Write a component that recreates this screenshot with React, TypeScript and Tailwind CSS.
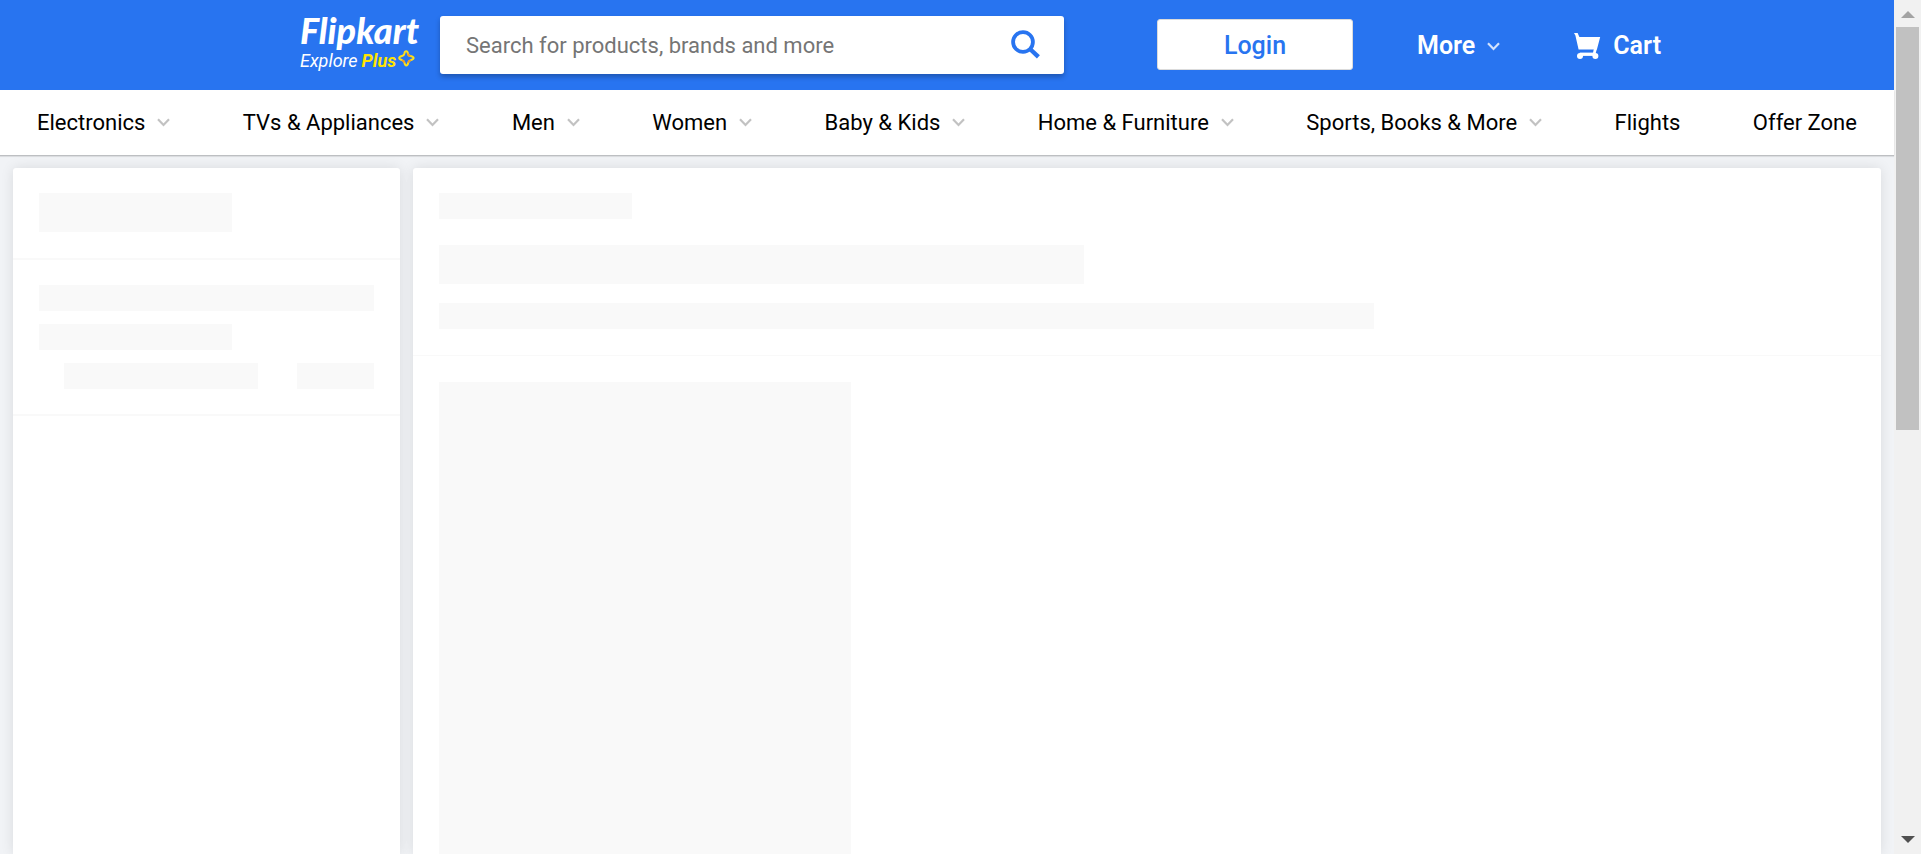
import React from "react";

const categories = [
  { label: "Electronics", menu: true },
  { label: "TVs & Appliances", menu: true },
  { label: "Men", menu: true },
  { label: "Women", menu: true },
  { label: "Baby & Kids", menu: true },
  { label: "Home & Furniture", menu: true },
  { label: "Sports, Books & More", menu: true },
  { label: "Flights", menu: false },
  { label: "Offer Zone", menu: false },
];

function Chevron({ className }: { className: string }) {
  return (
    <svg viewBox="0 0 13 9" className={"ml-3 h-[9px] w-[13px] shrink-0 " + className} fill="none" stroke="currentColor" strokeWidth="2.200" aria-hidden="true">
      <path d="M1 1.2 6.5 6.9 12 1.2" />
    </svg>
  );
}

function Logo() {
  return (
    <a href="#home" className="flex w-[140px] shrink-0 flex-col pb-2">
      <span className="font-['Lato'] text-[36px] leading-[40px] font-black text-white italic">Flipkart</span>
      <span className="flex items-start text-[18px] leading-[22px] text-white italic">
        <span>Explore</span>
        <span className="ml-1 font-bold text-[#ffe500]">Plus</span>
        <svg viewBox="0 0 17 17" className="ml-0.5 h-[17px] w-[17px]" fill="none" aria-hidden="true">
          <path d="M8.2 1.2c1 0 1.500.8 1.700 2.300.2 1.600.9 2.300 2.500 2.600 2 .4 3.200.9 3.200 2 0 1-.9 1.600-2.800 2-1.700.4-2.300 1.100-2.600 2.700-.3 1.700-.9 2.600-1.900 2.600s-1.500-.9-1.800-2.600c-.3-1.600-1-2.300-2.600-2.700C2 9.700 1.200 9.100 1.200 8.100c0-1 .9-1.600 2.700-2 1.500-.3 2.200-1 2.500-2.600.2-1.500.8-2.300 1.800-2.300Z" stroke="#ffe11b" strokeWidth="2" />
          <path d="M9.900 3.500c.2 1.600.9 2.300 2.500 2.600M12.800 10.100c-1.700.4-2.300 1.100-2.600 2.700M3.900 10.100c1.600.4 2.300 1.100 2.600 2.700" stroke="#f59b23" strokeWidth="2" />
        </svg>
      </span>
    </a>
  );
}

function Header() {
  return (
    <header className="flex h-[90px] items-center bg-[#2874f0] pl-[300px]">
      <Logo />
      <form className="flex h-[58px] max-w-[624px] flex-1 items-center rounded-[3px] bg-white shadow-[0_3px_5px_rgba(0,0,0,0.25)]">
        <input
          type="text"
          aria-label="Search for products, brands and more"
          placeholder="Search for products, brands and more"
          className="h-full min-w-0 flex-1 bg-transparent pl-[26px] text-[22px] text-black outline-none placeholder:text-[#757575]"
        />
        <button type="button" aria-label="Search" className="mr-[23px] flex h-[30px] w-[30px] items-center justify-center text-[#2874f0]">
          <svg viewBox="0 0 30 30" className="h-[30px] w-[30px]" fill="none" stroke="currentColor" aria-hidden="true">
            <circle cx="12" cy="12" r="9.900" strokeWidth="3.800" />
            <path d="M19 19 27.400 26.800" strokeWidth="4.400" />
          </svg>
        </button>
      </form>
      <div className="flex shrink-0 items-center text-[25px] text-white">
        <button type="button" className="mb-px ml-[93px] h-[51px] w-[196px] rounded-[3px] border border-[#dbdbdb] bg-white pt-0.5 font-medium text-[#2874f0]">
          Login
        </button>
        <button type="button" className="ml-16 flex items-center pt-0.5 font-semibold">
          More
          <Chevron className="text-[#d4e3fc]" />
        </button>
        <a href="#cart" className="ml-[74px] flex items-center pt-0.5 font-semibold">
          <svg viewBox="0 0 27 26" className="mr-3 h-[26px] w-[27px]" fill="currentColor" aria-hidden="true">
            <path d="M0 0H3.600L5.400 4H26.200L22.900 16.500H4.600L1.400 2.600Z" />
            <path d="M20 15.500H23L21.600 20.500H18.800Z" />
            <path d="M5.800 19.600H21.500V22.900H5.800Z" />
            <circle cx="6" cy="22.900" r="3" />
            <circle cx="21.400" cy="22.900" r="3" />
          </svg>
          Cart
        </a>
      </div>
    </header>
  );
}

function CategoryBar() {
  return (
    <nav className="relative z-10 flex h-[65px] items-center justify-between bg-white px-[37px] text-[22px] whitespace-nowrap text-black shadow-[0_1px_1px_rgba(0,0,0,0.16),0_2px_1px_rgba(0,0,0,0.06)]">
      {categories.map((c) => (
        <a key={c.label} href="#category" className="flex items-center">
          {c.label}
          {c.menu && <Chevron className="text-[#c2c2c2]" />}
        </a>
      ))}
    </nav>
  );
}

function Block({ className }: { className: string }) {
  return <div className={"bg-[#f9f9f9] " + className} />;
}

function FilterPanel() {
  return (
    <aside className="w-[387px] shrink-0 rounded-t-[3px] bg-white shadow-[0_0_13px_rgba(0,0,0,0.1)]">
      <div className="border-b-2 border-[#f9f9f9] px-[26px] pt-[25px] pb-[26px]">
        <Block className="h-[39px] w-[193px]" />
      </div>
      <div className="flex flex-col gap-[13px] border-b-2 border-[#f9f9f9] px-[26px] py-[25px]">
        <Block className="h-[26px] w-full" />
        <Block className="h-[26px] w-[193px]" />
        <div className="flex justify-between pl-[25px]">
          <Block className="h-[26px] w-[194px]" />
          <Block className="h-[26px] w-[77px]" />
        </div>
      </div>
    </aside>
  );
}

function ResultsPanel() {
  return (
    <main className="flex flex-1 flex-col rounded-t-[3px] bg-white shadow-[0_0_13px_rgba(0,0,0,0.1)]">
      <div className="border-b border-[#f9f9f9] px-[26px] pt-[25px] pb-[26px]">
        <Block className="h-[26px] w-[193px]" />
        <Block className="mt-[26px] h-[39px] w-[645px]" />
        <Block className="mt-[19px] h-[26px] w-[935px]" />
      </div>
      <div className="flex flex-1 px-[26px] pt-[26px]">
        <Block className="w-[412px]" />
      </div>
    </main>
  );
}

function ScrollTrack() {
  return (
    <div className="flex w-[27px] shrink-0 flex-col items-center bg-[#f1f1f1]" aria-hidden="true">
      <div className="flex h-[27px] items-center pt-0.5">
        <svg viewBox="0 0 14 7" className="h-[7px] w-[14px]" fill="#a3a3a3">
          <path d="M7 0 14 7H0Z" />
        </svg>
      </div>
      <div className="h-[403px] w-[23px] bg-[#c1c1c1]" />
      <div className="mt-auto flex h-[27px] items-center pb-0.5">
        <svg viewBox="0 0 14 7" className="h-[7px] w-[14px]" fill="#505050">
          <path d="M7 7 14 0H0Z" />
        </svg>
      </div>
    </div>
  );
}

export default function App() {
  return (
    <div className="flex h-screen overflow-hidden font-['Roboto',sans-serif]">
      <div className="flex min-w-0 flex-1 flex-col bg-[#f1f3f6]">
        <Header />
        <CategoryBar />
        <div className="flex flex-1 gap-[13px] px-[13px] pt-[13px]">
          <FilterPanel />
          <ResultsPanel />
        </div>
      </div>
      <ScrollTrack />
    </div>
  );
}
